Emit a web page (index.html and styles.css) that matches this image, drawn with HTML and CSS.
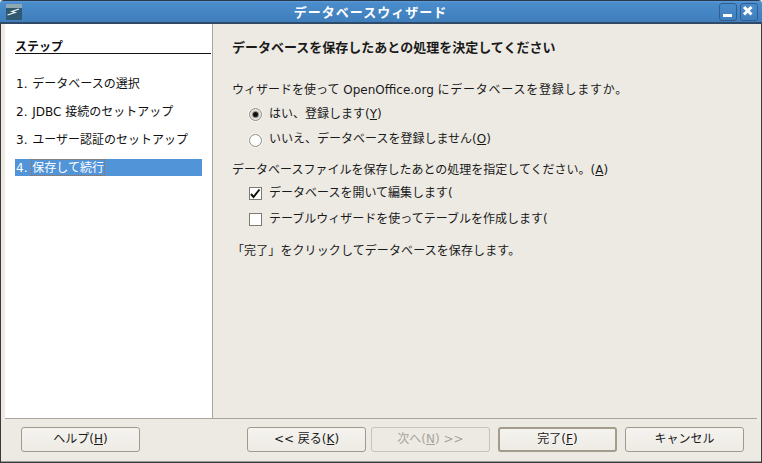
FILE: index.html
```
<!DOCTYPE html>
<html lang="ja">
<head>
<meta charset="utf-8">
<title>データベースウィザード</title>
<link rel="stylesheet" href="styles.css">
</head>
<body>
<div class="window">
  <header class="titlebar">
    <svg class="app-icon" width="16" height="16" viewBox="0 0 16 16"><rect width="16" height="16" rx="1" fill="#2f5a70"/><rect width="16" height="4" fill="#8fa8b4"/><path d="M1.5 11 L9 8.5 L6 7.5 L13 5" stroke="#eef3f5" stroke-width="1.3" fill="none"/></svg>
    <div class="title">データベースウィザード</div>
    <div class="wm-btn"><svg width="16" height="16" viewBox="0 0 16 16"><rect x="3" y="10" width="9" height="3" fill="#fff"/></svg></div>
    <div class="wm-btn"><svg width="16" height="16" viewBox="0 0 16 16"><path d="M3 3 L10.5 10.5 M10.5 3 L3 10.5" stroke="#fff" stroke-width="3"/></svg></div>
  </header>
  <div class="frame">
    <main class="body">
      <nav class="steps">
        <div class="steps-head">ステップ</div>
        <div class="step"><span class="num">1.</span> データベースの選択</div>
        <div class="step"><span class="num">2.</span> JDBC 接続のセットアップ</div>
        <div class="step"><span class="num">3.</span> ユーザー認証のセットアップ</div>
        <div class="step active"><span class="num">4.</span> <span class="focus">保存して続行</span></div>
      </nav>
      <section class="content">
        <h1 class="heading">データベースを保存したあとの処理を決定してください</h1>
        <p class="line q1">ウィザードを使って OpenOffice.org <span class="wide">にデータベースを登録しますか。</span></p>
        <div class="opt first"><span class="radio on"></span>はい、登録します(<u>Y</u>)</div>
        <div class="opt second"><span class="radio low"></span>いいえ、データベースを登録しません(<u>O</u>)</div>
        <p class="line q2">データベースファイルを保存したあとの処理を指定してください。(<u>A</u>)</p>
        <div class="opt first2"><span class="check"><svg width="11" height="11" viewBox="0 0 11 11"><path d="M1 6 L3.5 9 L9.5 1.5" stroke="#111" stroke-width="2" fill="none"/></svg></span>データベースを開いて編集します(</div>
        <div class="opt"><span class="check"></span>テーブルウィザードを使ってテーブルを作成します(</div>
        <p class="line q3">「完了」をクリックしてデータベースを保存します。</p>
      </section>
    </main>
    <footer class="footer">
      <button class="btn">ヘルプ(<u>H</u>)</button>
      <div class="spacer"></div>
      <button class="btn">&lt;&lt; 戻る(<u>K</u>)</button>
      <button class="btn next" disabled>次へ(<u>N</u>) &gt;&gt;</button>
      <button class="btn default">完了(<u>F</u>)</button>
      <button class="btn cancel">キャンセル</button>
    </footer>
  </div>
</div>
</body>
</html>
```
FILE: styles.css
```
html, body { margin: 0; padding: 0; }
body { width: 762px; height: 463px; overflow: hidden; background: #edeae4; font: 12px/17px "DejaVu Sans", "Noto Sans CJK JP", sans-serif; color: #1a1a1a; }
.window { width: 762px; height: 463px; display: flex; flex-direction: column; box-sizing: border-box; border-radius: 4px 4px 0 0; overflow: hidden; background: #edeae4; }
.titlebar { height: 24px; flex: none; box-sizing: border-box; display: flex; align-items: center; padding: 1px 4px 0 6px; gap: 3px; color: #fff; background: linear-gradient(#5b9bd8 0, #4a8ccb 2px, #3f7dbb 22px); border-top: 1px solid #2a3a4c; border-bottom: 2px solid #2f4a66; }
.app-icon { flex: none; }
.title { flex: 1; text-align: center; font-weight: bold; font-size: 13px; letter-spacing: 1px; }
.wm-btn { width: 16px; height: 16px; border: 1px solid #2f5f92; border-radius: 3px; flex: none; }
.wm-btn svg { display: block; }
.frame { flex: 1; display: flex; flex-direction: column; border: 1px solid #3a3a38; border-width: 0 1px 1px; padding: 0 4px; min-height: 0; box-shadow: inset 0 -1px 0 #999; }
.body { height: 394px; flex: none; display: flex; border-bottom: 1px solid #a9a59c; }
.steps { width: 208px; flex: none; box-sizing: border-box; background: #fff; border-right: 1px solid #a9a59c; padding: 15px 0 0 10px; color: #111; }
.steps-head { font-weight: bold; height: 14px; line-height: 17px; border-bottom: 1px solid #111; width: 196px; margin-bottom: 22px; }
.step { height: 17px; width: 187px; margin-bottom: 11px; padding-left: 1px; box-sizing: border-box; white-space: nowrap; }
.num { margin-right: 1px; }
.step.active { background: #5294d8; color: #fff; margin-top: -1px; line-height: 19px; }
.focus { display: inline-block; box-sizing: border-box; height: 17px; vertical-align: top; outline: 1px dotted #b06a30; outline-offset: -1px; padding: 0 1px; margin-left: -1px; }
.content { flex: 1; padding: 15px 0 0 19px; }
.heading { margin: 0; font-size: 13px; line-height: 17px; font-weight: bold; }
.line { margin: 0; white-space: nowrap; }
.q1 { margin-top: 26px; }
.q2 { margin-top: 14px; }
.q3 { margin-top: 15px; letter-spacing: .1px; }
.wide { letter-spacing: .75px; }
.opt { display: flex; align-items: center; height: 17px; margin-top: 9px; padding-left: 17px; white-space: nowrap; }
.opt.first { margin-top: 7px; }
.opt.second { margin-top: 8px; }
.opt.first2 { margin-top: 6px; }
.radio { width: 11px; height: 11px; margin-right: 7px; flex: none; border: 1px solid #8f8a80; border-radius: 50%; background: #fff; position: relative; box-shadow: 0 0 0 1px rgba(255,255,255,.5); }
.radio.low { margin-top: 2px; }
.radio.on { background: #e9e6e0; }
.radio.on::after { content: ""; position: absolute; left: 3px; top: 3px; width: 5px; height: 5px; border-radius: 50%; background: #111; box-shadow: 0 0 1px 1px #8a8780; }
.check { width: 11px; height: 11px; margin-right: 7px; flex: none; border: 1px solid #7f7a70; background: #fff; }
.check svg { display: block; }
.footer { flex: 1; display: flex; align-items: flex-start; padding: 8px 13px 0 16px; gap: 5px; }
.spacer { width: 97px; flex: none; }
.btn { width: 119px; height: 25px; flex: none; box-sizing: border-box; padding: 0; font: 12px/17px "DejaVu Sans", "Noto Sans CJK JP", sans-serif; color: #1a1a1a; background: linear-gradient(#f5f3ef, #eeebe5); border: 1px solid #a09a8e; border-radius: 3px; }
.btn.next { color: #a8a59e; background: #edeae4; border-color: #c6c2b9; }
.btn.default { margin-left: 3px; border: 2px solid #a39b8c; }
.btn.cancel { margin-left: 3px; }
```
